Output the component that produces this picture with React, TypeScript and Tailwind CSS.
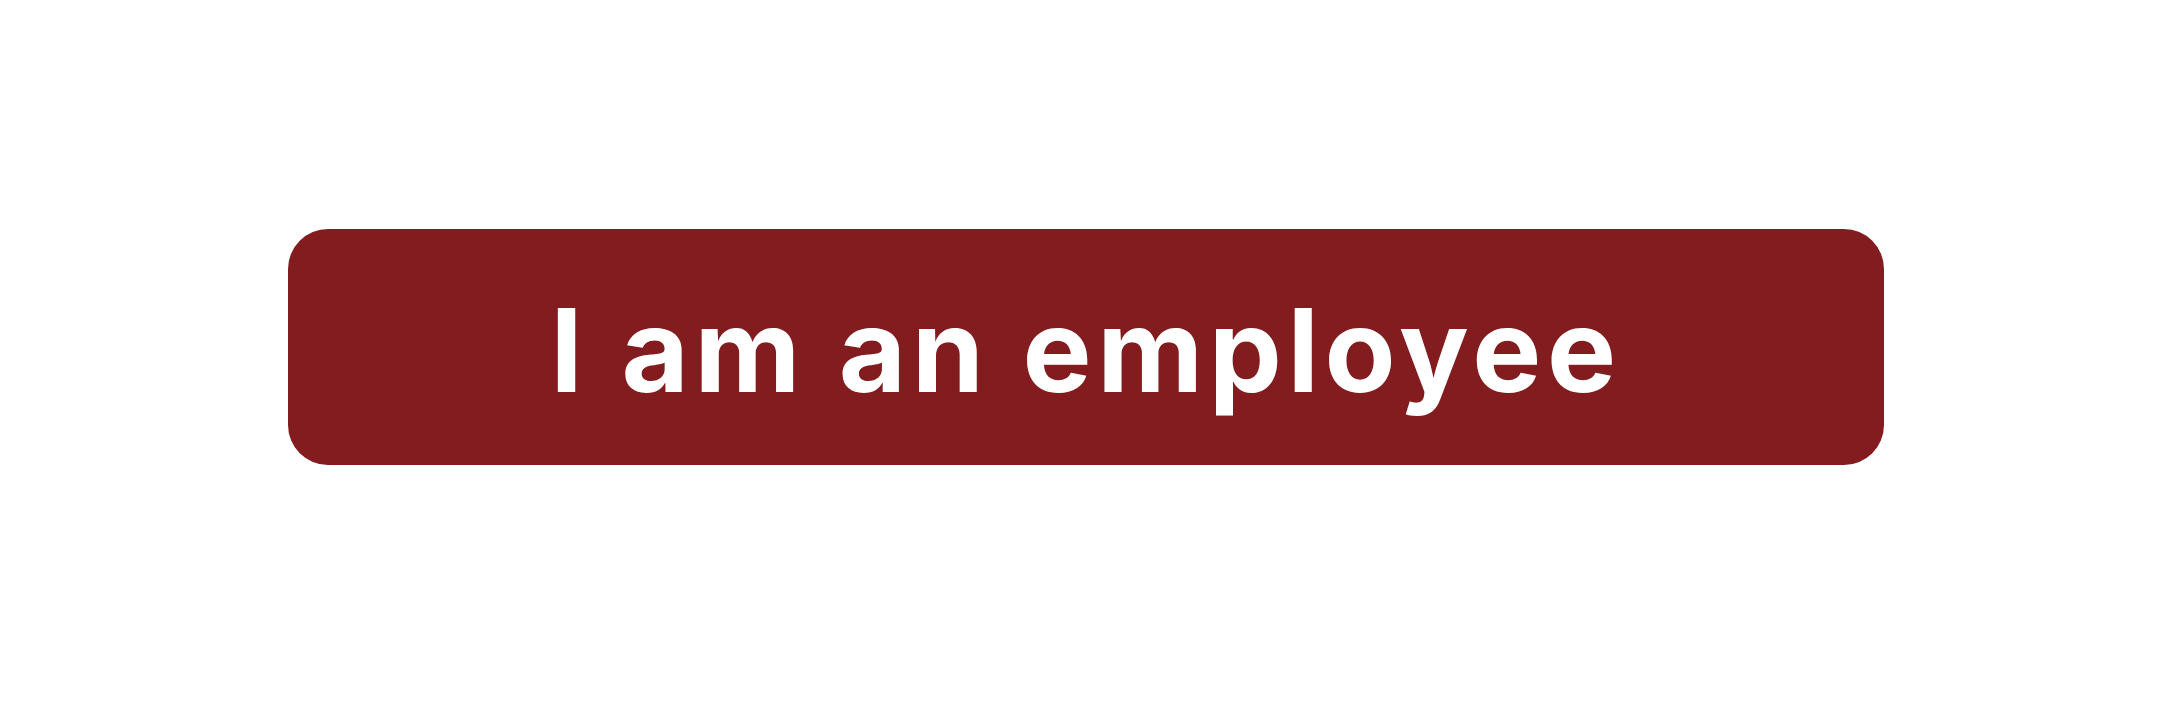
import React from 'react';

const App: React.FC = () => {
  return (
    <div className="flex h-[724px] w-full justify-center bg-white pt-[229px]">
      <button
        type="button"
        className="flex h-[236px] w-[1596px] items-center justify-center rounded-[40px] bg-[#831c1f] text-white"
      >
        <span
          className="pt-[6px] text-[116px] font-bold leading-none tracking-[0.048em]"
          style={{ fontFamily: 'Inter, "Noto Sans", sans-serif' }}
        >
          I am an employee
        </span>
      </button>
    </div>
  );
};

export default App;
